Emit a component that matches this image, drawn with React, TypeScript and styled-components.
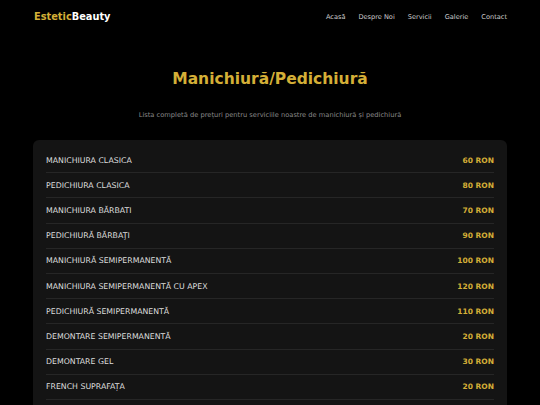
import React from 'react';
import styled, {createGlobalStyle} from 'styled-components';

interface PriceItem {
    name: string,
    price: number
}

const items: PriceItem[] = [
    {name: 'MANICHIURA CLASICA', price: 60},
    {name: 'PEDICHIURA CLASICA', price: 80},
    {name: 'MANICHIURA BĂRBATI', price: 70},
    {name: 'PEDICHIURĂ BĂRBAŢI', price: 90},
    {name: 'MANICHIURĂ SEMIPERMANENTĂ', price: 100},
    {name: 'MANICHIURA SEMIPERMANENTĂ CU APEX', price: 120},
    {name: 'PEDICHIURĂ SEMIPERMANENTĂ', price: 110},
    {name: 'DEMONTARE SEMIPERMANENTĂ', price: 20},
    {name: 'DEMONTARE GEL', price: 30},
    {name: 'FRENCH SUPRAFAȚA', price: 20},
];

const links = ['Acasă', 'Despre Noi', 'Servicii', 'Galerie', 'Contact'];

const App: React.FC = () => {
    return (
        <>
            <GlobalStyle/>
            <StyledHeader>
                <StyledLogo>Estetic<span>Beauty</span></StyledLogo>
                <StyledNav>
                    {links.map((l) => <StyledNavLink key={l}>{l}</StyledNavLink>)}
                </StyledNav>
            </StyledHeader>
            <StyledMain>
                <StyledTitle>Manichiură/Pedichiură</StyledTitle>
                <StyledSubtitle>Lista completă de prețuri pentru serviciile noastre de manichiură și pedichiură</StyledSubtitle>
                <StyledCard>
                    {items.map((item) => (
                        <StyledRow key={item.name}>
                            <StyledName>{item.name}</StyledName>
                            <StyledPrice>{item.price} RON</StyledPrice>
                        </StyledRow>
                    ))}
                </StyledCard>
            </StyledMain>
        </>
    )
}

const GlobalStyle = createGlobalStyle`
  body {
    margin: 0;
    background: #000;
    font-family: "DejaVu Sans", Verdana, sans-serif;
    overflow: hidden;
  }
`;

const StyledHeader = styled.header`
  width: 474px;
  margin: 0 auto;
  height: 33px;
  display: flex;
  align-items: center;
  justify-content: space-between;
`;

const StyledLogo = styled.div`
  font-size: 9.8px;
  font-weight: bold;
  color: #d4af37;
  padding-left: 1px;

  span {
    color: #fff;
  }
`;

const StyledNav = styled.nav`
  display: flex;
  gap: 13px;
`;

const StyledNavLink = styled.span`
  font-size: 6.6px;
  color: #cccccc;
  cursor: pointer;
`;

const StyledMain = styled.main`
  width: 474px;
  margin: 0 auto;
  display: flex;
  flex-direction: column;
  align-items: center;
`;

const StyledTitle = styled.h1`
  margin: 36px 0 0 0;
  font-size: 15.5px;
  line-height: 20px;
  color: #d4af37;
`;

const StyledSubtitle = styled.p`
  margin: 22px 0 0 0;
  font-size: 6.7px;
  color: #888;
`;

const StyledCard = styled.div`
  margin-top: 21px;
  align-self: stretch;
  background: #141414;
  border-radius: 6px;
  padding: 8px 13px 40px;
`;

const StyledRow = styled.div`
  display: flex;
  justify-content: space-between;
  align-items: center;
  height: 25.2px;
  box-sizing: border-box;
  border-bottom: 1px solid #262626;
`;

const StyledName = styled.span`
  font-size: 7.8px;
  color: #ddd;
`;

const StyledPrice = styled.span`
  font-size: 7.5px;
  font-weight: bold;
  color: #d4af37;
`;

export default App;
